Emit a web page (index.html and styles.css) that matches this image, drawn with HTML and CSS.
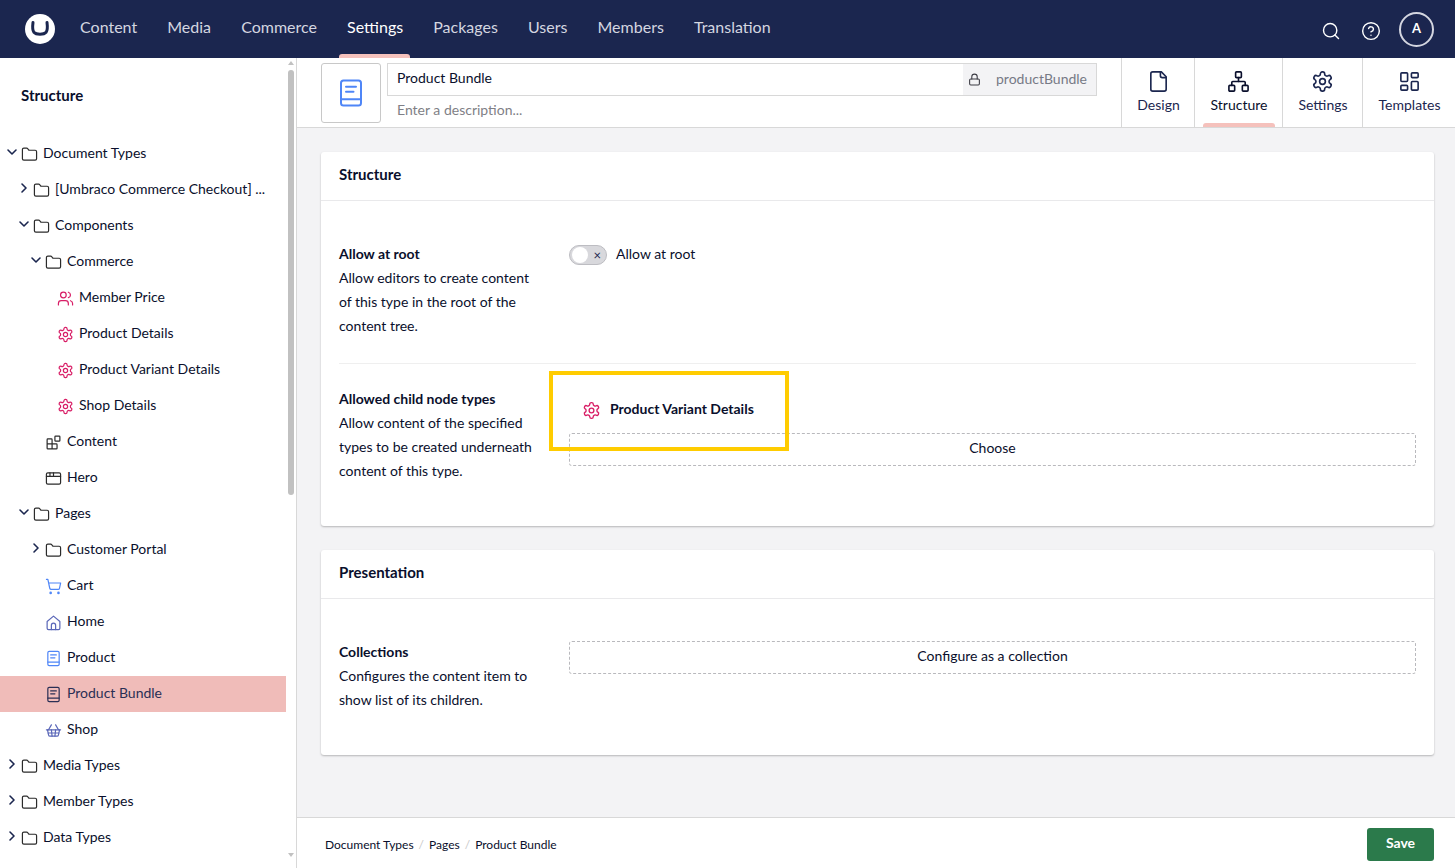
FILE: index.html
```html
<!DOCTYPE html>
<html lang="en">
<head>
    <meta charset="UTF-8">
    <title>Product Bundle - Umbraco</title>
    <link rel="stylesheet" href="styles.css">
</head>
<body>
    <svg class="sprites" width="0" height="0">
        <symbol id="i-folder" viewBox="0 0 24 24"><path d="M20 20a2 2 0 0 0 2-2V8a2 2 0 0 0-2-2h-7.9a2 2 0 0 1-1.69-.9L9.6 3.9A2 2 0 0 0 7.93 3H4a2 2 0 0 0-2 2v13a2 2 0 0 0 2 2Z"/></symbol>
        <symbol id="i-right" viewBox="0 0 24 24"><path d="m9 18 6-6-6-6"/></symbol>
        <symbol id="i-down" viewBox="0 0 24 24"><path d="m6 9 6 6 6-6"/></symbol>
        <symbol id="i-gear" viewBox="0 0 24 24"><path d="M12.22 2h-.44a2 2 0 0 0-2 2v.18a2 2 0 0 1-1 1.73l-.43.25a2 2 0 0 1-2 0l-.15-.08a2 2 0 0 0-2.73.73l-.22.38a2 2 0 0 0 .73 2.73l.15.1a2 2 0 0 1 1 1.72v.51a2 2 0 0 1-1 1.74l-.15.09a2 2 0 0 0-.73 2.73l.22.38a2 2 0 0 0 2.73.73l.15-.08a2 2 0 0 1 2 0l.43.25a2 2 0 0 1 1 1.73V20a2 2 0 0 0 2 2h.44a2 2 0 0 0 2-2v-.18a2 2 0 0 1 1-1.73l.43-.25a2 2 0 0 1 2 0l.15.08a2 2 0 0 0 2.73-.73l.22-.39a2 2 0 0 0-.73-2.73l-.15-.08a2 2 0 0 1-1-1.74v-.5a2 2 0 0 1 1-1.74l.15-.09a2 2 0 0 0 .73-2.73l-.22-.38a2 2 0 0 0-2.73-.73l-.15.08a2 2 0 0 1-2 0l-.43-.25a2 2 0 0 1-1-1.73V4a2 2 0 0 0-2-2z"/><circle cx="12" cy="12" r="3"/></symbol>
        <symbol id="i-users" viewBox="0 0 24 24"><path d="M16 21v-2a4 4 0 0 0-4-4H6a4 4 0 0 0-4 4v2"/><circle cx="9" cy="7" r="4"/><path d="M22 21v-2a4 4 0 0 0-3-3.87"/><path d="M16 3.13a4 4 0 0 1 0 7.75"/></symbol>
        <symbol id="i-blocks" viewBox="0 0 24 24"><rect x="14" y="3" width="7" height="7" rx="1"/><path d="M10 21V8a1 1 0 0 0-1-1H4a1 1 0 0 0-1 1v12a1 1 0 0 0 1 1h12a1 1 0 0 0 1-1v-5a1 1 0 0 0-1-1H3"/></symbol>
        <symbol id="i-window" viewBox="0 0 24 24"><rect x="2" y="4" width="20" height="16" rx="2"/><path d="M2 9h20M7 4v5M12 4v5"/></symbol>
        <symbol id="i-cart" viewBox="0 0 24 24"><circle cx="8" cy="21" r="1"/><circle cx="19" cy="21" r="1"/><path d="M2.05 2.05h2l2.66 12.42a2 2 0 0 0 2 1.58h9.78a2 2 0 0 0 1.95-1.57l1.65-7.43H5.12"/></symbol>
        <symbol id="i-home" viewBox="0 0 24 24"><path d="M3 10.5 12 3l9 7.500V20a2 2 0 0 1-2 2H5a2 2 0 0 1-2-2z"/><path d="M9 22v-6a3 3 0 0 1 6 0v6"/></symbol>
        <symbol id="i-book" viewBox="0 0 24 24"><rect x="4" y="2" width="16" height="20" rx="2"/><path d="M4 17h16M8 7h8M8 11h6"/></symbol>
        <symbol id="i-basket" viewBox="0 0 24 24"><path d="m15 11-1 9"/><path d="m19 11-4-7"/><path d="M2 11h20"/><path d="m3.500 11 1.600 7.400a2 2 0 0 0 2 1.600h9.800a2 2 0 0 0 2-1.600l1.700-7.400"/><path d="M4.500 15.500h15"/><path d="m5 11 4-7"/><path d="m9 11 1 9"/></symbol>
        <symbol id="i-file" viewBox="0 0 24 24"><path d="M15 2H6a2 2 0 0 0-2 2v16a2 2 0 0 0 2 2h12a2 2 0 0 0 2-2V7Z"/><path d="M14 2v4a2 2 0 0 0 2 2h4"/></symbol>
        <symbol id="i-network" viewBox="0 0 24 24"><rect x="16" y="16" width="6" height="6" rx="1"/><rect x="2" y="16" width="6" height="6" rx="1"/><rect x="9" y="2" width="6" height="6" rx="1"/><path d="M5 16v-3a1 1 0 0 1 1-1h12a1 1 0 0 1 1 1v3"/><path d="M12 12V8"/></symbol>
        <symbol id="i-layout" viewBox="0 0 24 24"><rect x="3" y="3" width="7" height="9" rx="1"/><rect x="14" y="3" width="7" height="5" rx="1"/><rect x="14" y="12" width="7" height="9" rx="1"/><rect x="3" y="16" width="7" height="5" rx="1"/></symbol>
        <symbol id="i-search" viewBox="0 0 24 24"><circle cx="11" cy="11" r="8"/><path d="m21 21-4.300-4.300"/></symbol>
        <symbol id="i-help" viewBox="0 0 24 24"><circle cx="12" cy="12" r="10"/><path d="M9.090 9a3 3 0 0 1 5.830 1c0 2-3 3-3 3"/><path d="M12 17h.01"/></symbol>
        <symbol id="i-lock" viewBox="0 0 24 24"><rect x="3" y="11" width="18" height="11" rx="2"/><path d="M7 11V7a5 5 0 0 1 10 0v4"/></symbol>
    </svg>

    <header class="topbar">
        <div class="logo"><svg viewBox="0 0 30 30"><path d="M8 8.500c-.6 4.500-.5 8 .9 9.700 1.300 1.500 3.500 2 6.100 2s4.800-.5 6.100-2c1.400-1.700 1.500-5.200.9-9.700"/></svg></div>
        <nav class="mainnav">
            <a>Content</a>
            <a>Media</a>
            <a>Commerce</a>
            <a class="active">Settings</a>
            <a>Packages</a>
            <a>Users</a>
            <a>Members</a>
            <a>Translation</a>
        </nav>
        <div class="topbar-tools">
            <svg class="ico tool-ico"><use href="#i-search"/></svg>
            <svg class="ico tool-ico"><use href="#i-help"/></svg>
            <div class="avatar">A</div>
        </div>
    </header>

    <div class="app">
        <aside class="sidebar">
            <div class="sidebar-inner">
                <h2 class="sidebar-title">Structure</h2>
                <ul class="tree">
                    <li class="row d0"><svg class="ico chev"><use href="#i-down"/></svg><svg class="ico tree-ico"><use href="#i-folder"/></svg><span>Document Types</span></li>
                    <li class="row d1"><svg class="ico chev"><use href="#i-right"/></svg><svg class="ico tree-ico"><use href="#i-folder"/></svg><span>[Umbraco Commerce Checkout] ...</span></li>
                    <li class="row d1"><svg class="ico chev"><use href="#i-down"/></svg><svg class="ico tree-ico"><use href="#i-folder"/></svg><span>Components</span></li>
                    <li class="row d2"><svg class="ico chev"><use href="#i-down"/></svg><svg class="ico tree-ico"><use href="#i-folder"/></svg><span>Commerce</span></li>
                    <li class="row d3"><i class="chev"></i><svg class="ico tree-ico pink"><use href="#i-users"/></svg><span>Member Price</span></li>
                    <li class="row d3"><i class="chev"></i><svg class="ico tree-ico pink"><use href="#i-gear"/></svg><span>Product Details</span></li>
                    <li class="row d3"><i class="chev"></i><svg class="ico tree-ico pink"><use href="#i-gear"/></svg><span>Product Variant Details</span></li>
                    <li class="row d3"><i class="chev"></i><svg class="ico tree-ico pink"><use href="#i-gear"/></svg><span>Shop Details</span></li>
                    <li class="row d2"><i class="chev"></i><svg class="ico tree-ico"><use href="#i-blocks"/></svg><span>Content</span></li>
                    <li class="row d2"><i class="chev"></i><svg class="ico tree-ico"><use href="#i-window"/></svg><span>Hero</span></li>
                    <li class="row d1"><svg class="ico chev"><use href="#i-down"/></svg><svg class="ico tree-ico"><use href="#i-folder"/></svg><span>Pages</span></li>
                    <li class="row d2"><svg class="ico chev"><use href="#i-right"/></svg><svg class="ico tree-ico"><use href="#i-folder"/></svg><span>Customer Portal</span></li>
                    <li class="row d2"><i class="chev"></i><svg class="ico tree-ico blue"><use href="#i-cart"/></svg><span>Cart</span></li>
                    <li class="row d2"><i class="chev"></i><svg class="ico tree-ico indigo"><use href="#i-home"/></svg><span>Home</span></li>
                    <li class="row d2"><i class="chev"></i><svg class="ico tree-ico blue"><use href="#i-book"/></svg><span>Product</span></li>
                    <li class="row d2 selected"><i class="chev"></i><svg class="ico tree-ico"><use href="#i-book"/></svg><span>Product Bundle</span></li>
                    <li class="row d2"><i class="chev"></i><svg class="ico tree-ico indigo"><use href="#i-basket"/></svg><span>Shop</span></li>
                    <li class="row d0"><svg class="ico chev"><use href="#i-right"/></svg><svg class="ico tree-ico"><use href="#i-folder"/></svg><span>Media Types</span></li>
                    <li class="row d0"><svg class="ico chev"><use href="#i-right"/></svg><svg class="ico tree-ico"><use href="#i-folder"/></svg><span>Member Types</span></li>
                    <li class="row d0"><svg class="ico chev"><use href="#i-right"/></svg><svg class="ico tree-ico"><use href="#i-folder"/></svg><span>Data Types</span></li>
                </ul>
            </div>
            <div class="scrollbar">
                <i class="arrow-up"></i>
                <div class="thumb"></div>
                <i class="arrow-down"></i>
            </div>
        </aside>

        <main class="main">
            <div class="editor-head">
                <div class="icon-box"><svg class="ico blue"><use href="#i-book"/></svg></div>
                <div class="name-col">
                    <div class="name-field">
                        <span class="name-value">Product Bundle</span>
                        <div class="alias"><svg class="ico"><use href="#i-lock"/></svg><span>productBundle</span></div>
                    </div>
                    <div class="desc">Enter a description...</div>
                </div>
                <div class="tabs">
                    <a class="tab tab-design"><svg class="ico"><use href="#i-file"/></svg><span>Design</span></a>
                    <a class="tab tab-structure active"><svg class="ico"><use href="#i-network"/></svg><span>Structure</span></a>
                    <a class="tab tab-settings"><svg class="ico"><use href="#i-gear"/></svg><span>Settings</span></a>
                    <a class="tab tab-templates"><svg class="ico"><use href="#i-layout"/></svg><span>Templates</span></a>
                </div>
            </div>

            <div class="content">
                <section class="card">
                    <h3 class="card-title">Structure</h3>
                    <div class="card-body">
                        <div class="prop">
                            <div class="prop-label">
                                <strong>Allow at root</strong>
                                <p>Allow editors to create content of this type in the root of the content tree.</p>
                            </div>
                            <div class="prop-editor">
                                <label class="toggle-row">
                                    <span class="toggle"><i class="knob"></i><b class="toggle-x">×</b></span>
                                    <span>Allow at root</span>
                                </label>
                            </div>
                        </div>
                        <div class="prop prop-line">
                            <div class="prop-label">
                                <strong>Allowed child node types</strong>
                                <p>Allow content of the specified types to be created underneath content of this type.</p>
                            </div>
                            <div class="prop-editor">
                                <div class="picked"><svg class="ico pink"><use href="#i-gear"/></svg><span>Product Variant Details</span></div>
                                <button class="add-btn">Choose</button>
                            </div>
                            <div class="highlight"></div>
                        </div>
                    </div>
                </section>

                <section class="card">
                    <h3 class="card-title">Presentation</h3>
                    <div class="card-body">
                        <div class="prop">
                            <div class="prop-label">
                                <strong>Collections</strong>
                                <p>Configures the content item to show list of its children.</p>
                            </div>
                            <div class="prop-editor">
                                <button class="add-btn add-btn-top">Configure as a collection</button>
                            </div>
                        </div>
                    </div>
                </section>
            </div>

            <footer class="footer">
                <div class="crumbs">
                    <a>Document Types</a><i>/</i><a>Pages</a><i>/</i><a>Product Bundle</a>
                </div>
                <button class="save">Save</button>
            </footer>
        </main>
    </div>
</body>
</html>
```

FILE: styles.css
```css
* {
    box-sizing: border-box;
}
html, body {
    height: 100%;
}
body {
    margin: 0;
    font-family: Lato, "Open Sans", sans-serif;
    font-size: 14px;
    color: #0a0f2c;
    background: #fff;
    overflow: hidden;
    display: flex;
    flex-direction: column;
}
.sprites {
    position: absolute;
}
.ico {
    fill: none;
    stroke: currentColor;
    stroke-width: 1.75;
    stroke-linecap: round;
    stroke-linejoin: round;
    display: block;
    flex: none;
}
.pink {
    color: #d81e66;
}
.blue {
    color: #4f86f7;
}
.indigo {
    color: #5a67b8;
}

/* top bar */
.topbar {
    height: 58px;
    flex: none;
    display: flex;
    align-items: center;
    background: #1b264f;
    padding: 0 21px 0 25px;
}
.logo {
    width: 30px;
    height: 30px;
    border-radius: 50%;
    background: #fff;
}
.logo svg {
    display: block;
    fill: none;
    stroke: #1b264f;
    stroke-width: 3;
    stroke-linecap: round;
}
.mainnav {
    display: flex;
    height: 100%;
    margin-left: 10px;
}
.mainnav a {
    position: relative;
    display: flex;
    align-items: center;
    padding: 0 15.050px 6px;
    font-size: 16px;
    color: #d4d6e0;
}
.mainnav a.active {
    color: #fff;
}
.mainnav a.active::after {
    content: "";
    position: absolute;
    left: 7px;
    right: 8px;
    bottom: 0;
    height: 4px;
    background: #f5c1bc;
    border-radius: 3px 3px 0 0;
}
.topbar-tools {
    margin-left: auto;
    display: flex;
    align-items: center;
    color: #fff;
}
.tool-ico {
    width: 20px;
    height: 20px;
    margin-right: 20px;
    margin-top: 3px;
    stroke-width: 1.700;
}
.avatar {
    width: 35px;
    height: 35px;
    border: 2px solid #d4d6e0;
    border-radius: 50%;
    display: flex;
    align-items: center;
    justify-content: center;
    padding-bottom: 3px;
    font-size: 13px;
    font-weight: 700;
    margin-left: -2px;
}

.app {
    flex: 1;
    min-height: 0;
    display: flex;
}

/* sidebar */
.sidebar {
    width: 297px;
    flex: none;
    display: flex;
    border-right: 1px solid #d8d8d8;
}
.sidebar-inner {
    flex: 1;
    min-width: 0;
}
.sidebar-title {
    margin: 0;
    height: 78px;
    padding: 0 0 5px 21px;
    display: flex;
    align-items: center;
    font-size: 15px;
    font-weight: 700;
}
.tree {
    list-style: none;
    margin: 0;
    padding: 0;
}
.row {
    height: 36px;
    display: flex;
    align-items: center;
}
.row span {
    padding-bottom: 4px;
}
.row.selected {
    background: #f0bcb9;
    color: #2a2f55;
}
.d0 {
    padding-left: 6px;
}
.d1 {
    padding-left: 18px;
}
.d2 {
    padding-left: 30px;
}
.d3 {
    padding-left: 42px;
}
.chev {
    width: 16px;
    height: 16px;
    margin: -4px 1px 0 -2px;
    stroke-width: 2.400;
    color: #1b264f;
    display: block;
    flex: none;
}
.tree-ico {
    width: 17px;
    height: 17px;
    margin-right: 5px;
    stroke-width: 1.700;
    color: #2b2b2b;
}
.tree-ico.pink {
    color: #d81e66;
}
.tree-ico.blue {
    color: #4f86f7;
}
.tree-ico.indigo {
    color: #5a67b8;
}
.selected .tree-ico {
    color: #2a2f55;
}

/* fake scrollbar */
.scrollbar {
    width: 10px;
    flex: none;
    position: relative;
}
.thumb {
    position: absolute;
    top: 12px;
    left: 2px;
    width: 6px;
    height: 425px;
    border-radius: 3px;
    background: #c1c1c1;
}
.arrow-up, .arrow-down {
    position: absolute;
    left: 2px;
    border-left: 3px solid transparent;
    border-right: 3px solid transparent;
}
.arrow-up {
    top: 3px;
    border-bottom: 4px solid #c1c1c1;
}
.arrow-down {
    bottom: 11px;
    border-top: 4px solid #c1c1c1;
}

/* main */
.main {
    flex: 1;
    min-width: 0;
    display: flex;
    flex-direction: column;
    background: #f3f3f5;
}
.editor-head {
    height: 70px;
    flex: none;
    display: flex;
    background: #fff;
    border-bottom: 1px solid #d8d8d8;
    padding-left: 24px;
}
.icon-box {
    width: 60px;
    height: 60px;
    margin-top: 5px;
    border: 1px solid #c8c8c8;
    border-radius: 3px;
    display: flex;
    align-items: center;
    justify-content: center;
}
.icon-box .ico {
    width: 30px;
    height: 30px;
    stroke-width: 1.600;
}
.name-col {
    width: 710px;
    margin: 5px 0 0 6px;
}
.name-field {
    height: 33px;
    display: flex;
    border: 1px solid #d8d8d8;
    border-left-width: 1px;
}
.name-value {
    flex: 1;
    padding: 0 9px;
    line-height: 27px;
    color: #0a0f2c;
}
.alias {
    width: 133px;
    background: #f3f3f5;
    display: flex;
    align-items: center;
    padding-left: 5px;
    padding-bottom: 2px;
    color: #777a86;
}
.alias .ico {
    width: 13px;
    height: 13px;
    margin: 2px 15px 0 0;
    stroke-width: 2;
    color: #3d3d45;
}
.desc {
    padding-left: 10px;
    line-height: 28px;
    color: #7f7f86;
}
.tabs {
    margin-left: auto;
    display: flex;
}
.tab {
    position: relative;
    display: flex;
    flex-direction: column;
    align-items: center;
    border-left: 1px solid #d8d8d8;
    padding-top: 12px;
    color: #1b264f;
}
.tab .ico {
    width: 23px;
    height: 23px;
    margin-bottom: 1px;
    stroke-width: 1.700;
}
.tab span {
    line-height: 22px;
    padding-left: 1px;
}
.tab-design {
    width: 73px;
}
.tab-structure {
    width: 88px;
    color: #0a0f2c;
}
.tab-settings {
    width: 80px;
}
.tab-templates {
    width: 93px;
}
.tab.active::after {
    content: "";
    position: absolute;
    left: 8px;
    right: 7px;
    bottom: 0;
    height: 4px;
    background: #f5c1bc;
    border-radius: 3px 3px 0 0;
}

.content {
    flex: 1;
    min-height: 0;
    padding: 24px 21px 0 24px;
    display: flex;
    flex-direction: column;
    gap: 24px;
}
.card {
    background: #fff;
    border-radius: 3px;
    box-shadow: 0 1px 2px rgba(0, 0, 0, 0.25);
}
.card-title {
    margin: 0;
    height: 49px;
    padding: 0 0 4px 18px;
    display: flex;
    align-items: center;
    font-size: 15px;
    font-weight: 700;
    border-bottom: 1px solid #e9e9eb;
}
.card-body {
    padding: 18px;
    padding-right: 18px;
}
.prop {
    position: relative;
    display: flex;
    padding: 23px 0 25px;
}
.prop-line {
    border-top: 1px solid #efefef;
}
.prop-label {
    width: 230px;
    flex: none;
    padding-right: 30px;
    line-height: 24px;
}
.prop-label strong {
    display: block;
}
.prop-label p {
    margin: 0;
}
.prop-line .prop-label {
    padding-right: 25px;
}
.prop-editor {
    flex: 1;
    min-width: 0;
}
.toggle-row {
    display: flex;
    align-items: center;
    gap: 9px;
    line-height: 24px;
}
.toggle {
    position: relative;
    width: 38px;
    height: 20px;
    margin-top: 2px;
    border-radius: 10px;
    background: #d8d8dc;
    border: 1px solid #bdbdc2;
}
.knob {
    position: absolute;
    left: 2px;
    top: 1px;
    width: 16px;
    height: 16px;
    border-radius: 50%;
    background: #fff;
}
.toggle-x {
    position: absolute;
    right: 5px;
    top: 0;
    font-size: 13px;
    line-height: 18px;
    font-weight: 400;
    color: #1b264f;
}
.picked {
    height: 46px;
    display: flex;
    align-items: center;
    padding-left: 13px;
    font-weight: 700;
}
.picked span {
    padding-bottom: 4px;
}
.picked .ico {
    width: 19px;
    height: 19px;
    margin-right: 9px;
    stroke-width: 1.700;
}
.add-btn {
    display: block;
    width: 100%;
    height: 33px;
    border: 1px dashed #b9b9bd;
    border-radius: 3px;
    background: #fff;
    font: inherit;
    color: #0a0f2c;
    padding: 0 0 4px;
}
.add-btn-top {
    margin-top: 1px;
}
/* yellow annotation drawn over the screenshot */
.highlight {
    position: absolute;
    left: 210px;
    top: 7px;
    width: 240px;
    height: 80px;
    border: 4px solid #ffcc00;
}

.footer {
    height: 51px;
    flex: none;
    display: flex;
    align-items: center;
    background: #fff;
    border-top: 1px solid #d8d8d8;
    padding: 0 21px 0 28px;
}
.crumbs {
    display: flex;
    align-items: center;
    font-size: 12px;
    margin-top: 2px;
}
.crumbs i {
    font-style: normal;
    color: #c8c8c8;
    padding: 0 5px;
}
.save {
    margin-left: auto;
    width: 67px;
    height: 33px;
    margin-top: 2px;
    border: none;
    border-radius: 3px;
    background: #2b7a4b;
    color: #fff;
    font: inherit;
    font-weight: 700;
    padding: 0 0 4px;
}
```
